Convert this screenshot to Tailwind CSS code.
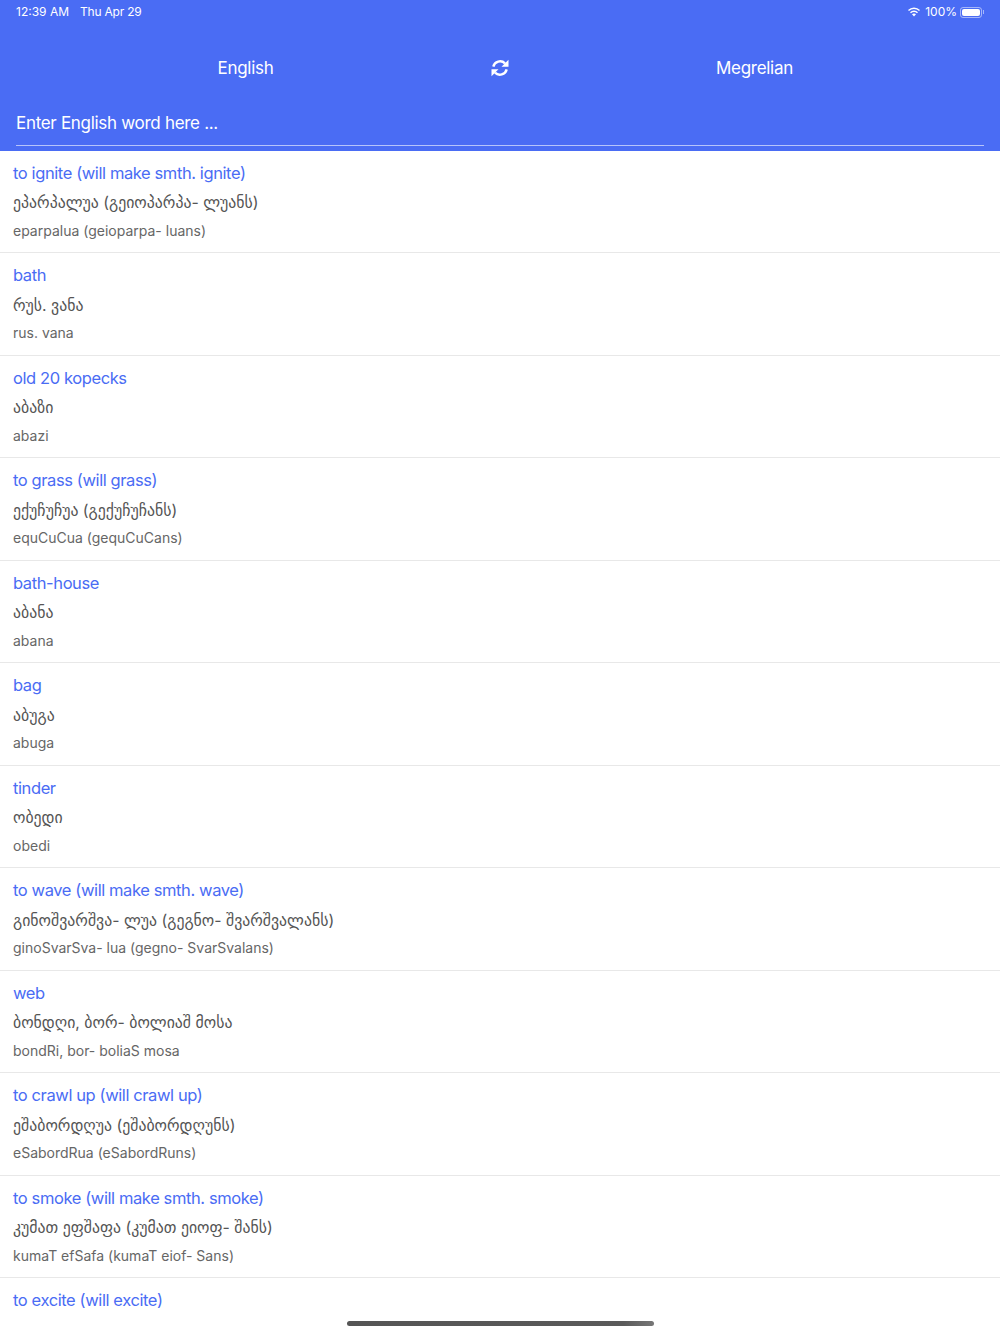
<!DOCTYPE html>
<html lang="en">
<head>
    <meta charset="UTF-8">
    <meta name="viewport" content="width=device-width, initial-scale=1.0">
    <title>English Megrelian Dictionary</title>
    <script src="https://cdn.jsdelivr.net/npm/@tailwindcss/browser@4"></script>
</head>
<body class="bg-white font-['Inter','DejaVu_Sans',sans-serif]">
<div class="relative w-[1000px] h-[1334px] overflow-hidden bg-white">

    <!-- Header -->
    <header class="bg-[#4a6cf4] text-white h-[150.5px] flex flex-col">
        <div class="h-6 px-4 flex items-center justify-between text-xs">
            <div class="flex gap-[11px]"><span>12:39 AM</span><span class="tracking-[-0.2px]">Thu Apr 29</span></div>
            <div class="flex items-center">
                <svg class="w-[14px] h-[10px] mr-[4px]" viewBox="0 0 14 10" fill="white"><path d="M7 2.100c1.900 0 3.700.7 5 2l1-1A8.600 8.600 0 0 0 7 .6 8.600 8.600 0 0 0 1 3.100l1 1a7.200 7.200 0 0 1 5-2z"/><path d="M7 5c1.100 0 2.200.4 3 1.200l1-1A5.700 5.700 0 0 0 7 3.500a5.700 5.700 0 0 0-4 1.700l1 1C4.800 5.400 5.900 5 7 5z"/><path d="M7 6.500c-.8 0-1.500.3-2 .8L7 9.500l2-2.200c-.5-.5-1.200-.8-2-.8z"/></svg>
                <span>100%</span>
                <div class="flex items-center ml-[3px]">
                    <div class="w-[22px] h-[11px] rounded-[3px] border border-white/50 p-[1px]"><div class="w-full h-full rounded-[2px] bg-white"></div></div>
                    <div class="w-[1px] h-1 bg-white/50 ml-[1px]"></div>
                </div>
            </div>
        </div>
        <div class="h-[64px] mt-[12px] grid grid-cols-[491px_18px_491px] items-center text-[17px] tracking-[-0.3px]">
            <div class="text-center pt-[2px]">English</div>
            <svg class="w-[18px] h-[18px]" viewBox="0 0 18 18" fill="white"><path d="M2.300 7.600A7 7 0 0 1 14 4.300" fill="none" stroke="white" stroke-width="2.400"/><path d="M17.500 .8v7h-7z"/><path d="M15.700 10.400A7 7 0 0 1 4 13.700" fill="none" stroke="white" stroke-width="2.400"/><path d="M.5 17.200v-7h7z"/></svg>
            <div class="text-center pt-[2px]">Megrelian</div>
        </div>
        <div class="mx-4 h-[46px] pt-[2px] border-b border-white/60 text-[17px] tracking-[-0.3px] flex items-center">Enter English word here ...</div>
    </header>

    <!-- Word list -->
    <ul id="word-list" class="text-[#4a6cf4]">
        <li class="h-[102.5px] px-[13px] pt-[11.25px] border-b border-[#e8e8e8]">
            <p class="h-[29.25px] text-[16.5px] tracking-[-0.4px] leading-[23px]">to ignite (will make smth. ignite)</p>
            <p class="h-[29.75px] text-[15.8px] leading-[23px] text-[#555]">ეპარპალუა (გეიოპარპა- ლუანს)</p>
            <p class="text-sm leading-[20px] text-[#666]">eparpalua (geioparpa- luans)</p>
        </li>
        <li class="h-[102.5px] px-[13px] pt-[11.25px] border-b border-[#e8e8e8]">
            <p class="h-[29.25px] text-[16.5px] tracking-[-0.4px] leading-[23px]">bath</p>
            <p class="h-[29.75px] text-[15.8px] leading-[23px] text-[#555]">რუს. ვანა</p>
            <p class="text-sm leading-[20px] text-[#666]">rus. vana</p>
        </li>
        <li class="h-[102.5px] px-[13px] pt-[11.25px] border-b border-[#e8e8e8]">
            <p class="h-[29.25px] text-[16.5px] tracking-[-0.4px] leading-[23px]">old 20 kopecks</p>
            <p class="h-[29.75px] text-[15.8px] leading-[23px] text-[#555]">აბაზი</p>
            <p class="text-sm leading-[20px] text-[#666]">abazi</p>
        </li>
        <li class="h-[102.5px] px-[13px] pt-[11.25px] border-b border-[#e8e8e8]">
            <p class="h-[29.25px] text-[16.5px] tracking-[-0.4px] leading-[23px]">to grass (will grass)</p>
            <p class="h-[29.75px] text-[15.8px] leading-[23px] text-[#555]">ექუჩუჩუა (გექუჩუჩანს)</p>
            <p class="text-sm leading-[20px] text-[#666]">equCuCua (gequCuCans)</p>
        </li>
        <li class="h-[102.5px] px-[13px] pt-[11.25px] border-b border-[#e8e8e8]">
            <p class="h-[29.25px] text-[16.5px] tracking-[-0.4px] leading-[23px]">bath-house</p>
            <p class="h-[29.75px] text-[15.8px] leading-[23px] text-[#555]">აბანა</p>
            <p class="text-sm leading-[20px] text-[#666]">abana</p>
        </li>
        <li class="h-[102.5px] px-[13px] pt-[11.25px] border-b border-[#e8e8e8]">
            <p class="h-[29.25px] text-[16.5px] tracking-[-0.4px] leading-[23px]">bag</p>
            <p class="h-[29.75px] text-[15.8px] leading-[23px] text-[#555]">აბუგა</p>
            <p class="text-sm leading-[20px] text-[#666]">abuga</p>
        </li>
        <li class="h-[102.5px] px-[13px] pt-[11.25px] border-b border-[#e8e8e8]">
            <p class="h-[29.25px] text-[16.5px] tracking-[-0.4px] leading-[23px]">tinder</p>
            <p class="h-[29.75px] text-[15.8px] leading-[23px] text-[#555]">ობედი</p>
            <p class="text-sm leading-[20px] text-[#666]">obedi</p>
        </li>
        <li class="h-[102.5px] px-[13px] pt-[11.25px] border-b border-[#e8e8e8]">
            <p class="h-[29.25px] text-[16.5px] tracking-[-0.4px] leading-[23px]">to wave (will make smth. wave)</p>
            <p class="h-[29.75px] text-[15.8px] leading-[23px] text-[#555]">გინოშვარშვა- ლუა (გეგნო- შვარშვალანს)</p>
            <p class="text-sm leading-[20px] text-[#666]">ginoSvarSva- lua (gegno- SvarSvalans)</p>
        </li>
        <li class="h-[102.5px] px-[13px] pt-[11.25px] border-b border-[#e8e8e8]">
            <p class="h-[29.25px] text-[16.5px] tracking-[-0.4px] leading-[23px]">web</p>
            <p class="h-[29.75px] text-[15.8px] leading-[23px] text-[#555]">ბონდღი, ბორ- ბოლიაშ მოსა</p>
            <p class="text-sm leading-[20px] text-[#666]">bondRi, bor- boliaS mosa</p>
        </li>
        <li class="h-[102.5px] px-[13px] pt-[11.25px] border-b border-[#e8e8e8]">
            <p class="h-[29.25px] text-[16.5px] tracking-[-0.4px] leading-[23px]">to crawl up (will crawl up)</p>
            <p class="h-[29.75px] text-[15.8px] leading-[23px] text-[#555]">ეშაბორდღუა (ეშაბორდღუნს)</p>
            <p class="text-sm leading-[20px] text-[#666]">eSabordRua (eSabordRuns)</p>
        </li>
        <li class="h-[102.5px] px-[13px] pt-[11.25px] border-b border-[#e8e8e8]">
            <p class="h-[29.25px] text-[16.5px] tracking-[-0.4px] leading-[23px]">to smoke (will make smth. smoke)</p>
            <p class="h-[29.75px] text-[15.8px] leading-[23px] text-[#555]">კუმათ ეფშაფა (კუმათ ეიოფ- შანს)</p>
            <p class="text-sm leading-[20px] text-[#666]">kumaT efSafa (kumaT eiof- Sans)</p>
        </li>
        <li class="h-[102.5px] px-[13px] pt-[11.25px]">
            <p class="h-[29.25px] text-[16.5px] tracking-[-0.4px] leading-[23px]">to excite (will excite)</p>
        </li>
    </ul>

    <!-- Home indicator -->
    <div class="absolute left-[347px] top-[1321px] w-[307px] h-[5px] rounded-full bg-linear-to-r from-[#555] via-[#5a5a5a] via-90% to-[#777]"></div>
</div>
</body>
</html>
